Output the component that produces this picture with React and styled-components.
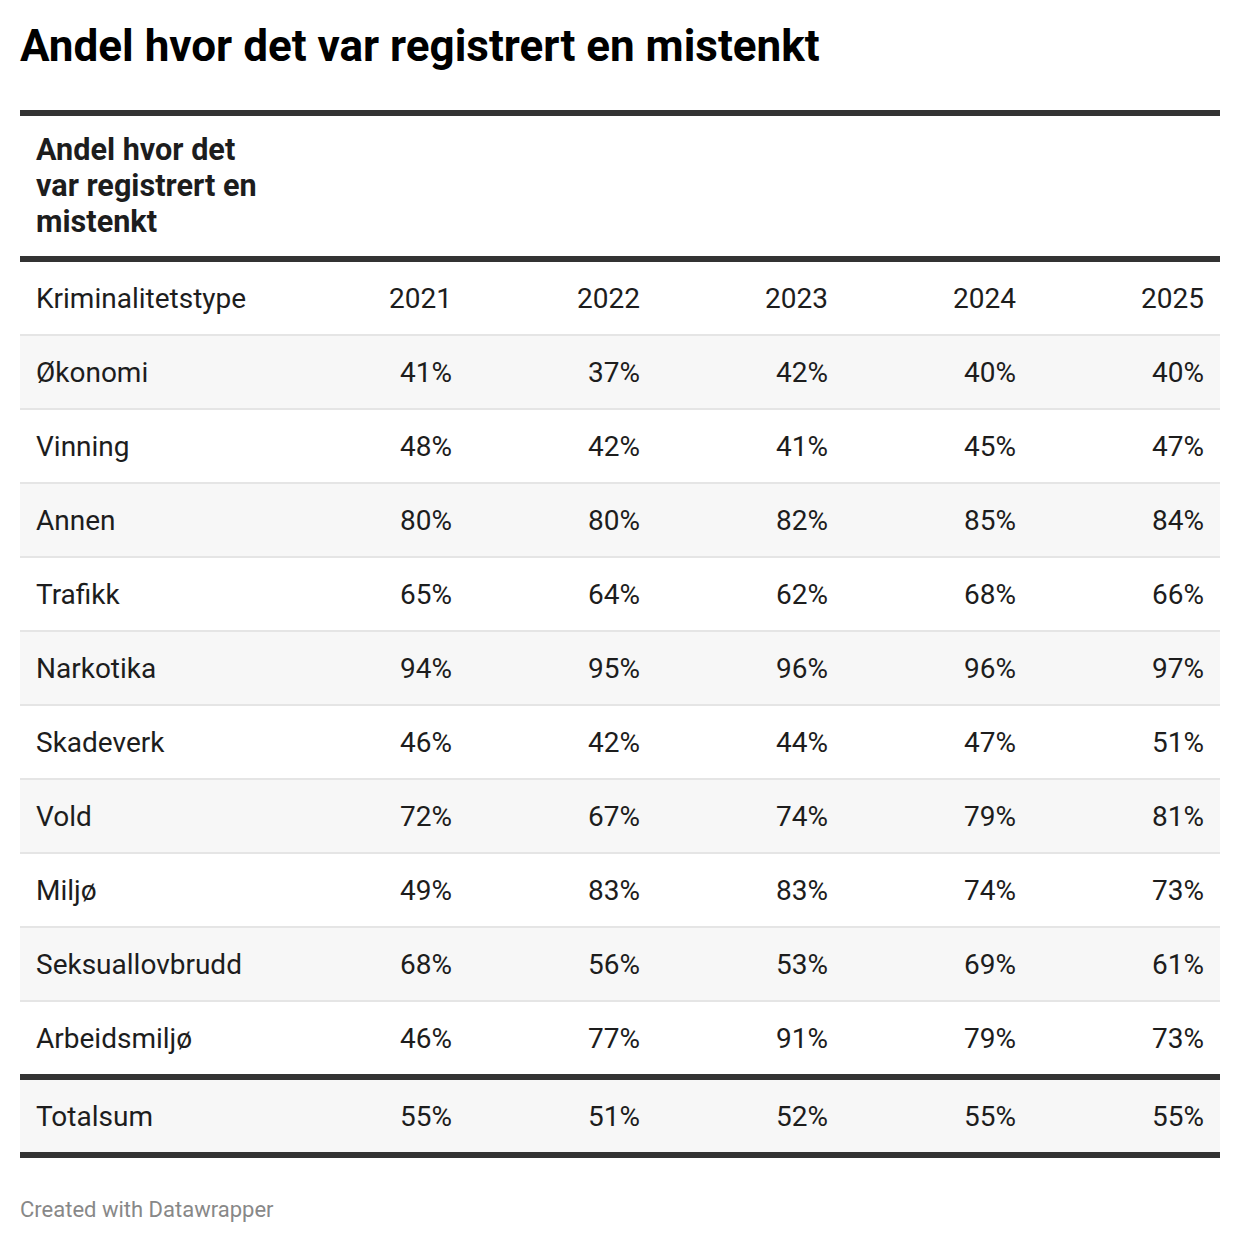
import styled, { createGlobalStyle } from 'styled-components'

const GlobalStyle = createGlobalStyle`
  body {
    margin: 0;
    background: #fff;
    font-family: Roboto, 'Liberation Sans', sans-serif;
    color: #1d1d1d;
  }
`

const Wrapper = styled.div`
  padding: 20px 20px 0;
`

const Title = styled.h1`
  margin: 0;
  font-size: 44px;
  line-height: 52px;
  font-weight: 700;
  color: #000;
`

const Table = styled.table`
  width: 100%;
  margin-top: 38px;
  border-collapse: collapse;
  table-layout: fixed;
  border-top: 6px solid #333;
  border-bottom: 6px solid #333;
`

const Caption = styled.th`
  padding: 16px 16px 16px;
  text-align: left;
  font-size: 30.6px;
  line-height: 36px;
  font-weight: 700;
  color: #1d1d1d;
  border-bottom: 6px solid #333;
`

const Cell = styled.td`
  height: 71px;
  padding: 1px 16px 0;
  font-size: 28px;
  line-height: 36px;
  text-align: ${({ $left }) => ($left ? 'left' : 'right')};
  white-space: nowrap;
`

const HeadCell = styled(Cell).attrs({ as: 'th' })`
  font-weight: 400;
`

const Row = styled.tr`
  background: ${({ $shaded }) => ($shaded ? '#f7f7f7' : '#fff')};
  border-bottom: ${({ $last }) => ($last ? '6px solid #333' : '2px solid #e5e5e5')};
`

const TotalRow = styled.tr`
  background: #f7f7f7;
`

const Footer = styled.div`
  padding: 40px 0 20px;
  font-size: 22px;
  line-height: 24px;
  color: #888;
`

const years = ['2021', '2022', '2023', '2024', '2025']

const rows = [
  ['Økonomi', '41%', '37%', '42%', '40%', '40%'],
  ['Vinning', '48%', '42%', '41%', '45%', '47%'],
  ['Annen', '80%', '80%', '82%', '85%', '84%'],
  ['Trafikk', '65%', '64%', '62%', '68%', '66%'],
  ['Narkotika', '94%', '95%', '96%', '96%', '97%'],
  ['Skadeverk', '46%', '42%', '44%', '47%', '51%'],
  ['Vold', '72%', '67%', '74%', '79%', '81%'],
  ['Miljø', '49%', '83%', '83%', '74%', '73%'],
  ['Seksuallovbrudd', '68%', '56%', '53%', '69%', '61%'],
  ['Arbeidsmiljø', '46%', '77%', '91%', '79%', '73%']
]

const total = ['Totalsum', '55%', '51%', '52%', '55%', '55%']

const App = () => (
  <Wrapper>
    <GlobalStyle />
    <Title>Andel hvor det var registrert en mistenkt</Title>

    <Table>
      <colgroup>
        <col style={ { width: 260 } } />
        { years.map(y => <col key={ y } />) }
      </colgroup>
      <thead>
        <tr>
          <Caption colSpan={ 6 }>
            Andel hvor det<br />var registrert en<br />mistenkt
          </Caption>
        </tr>
        <Row>
          <HeadCell $left>Kriminalitetstype</HeadCell>
          { years.map(y => <HeadCell key={ y }>{ y }</HeadCell>) }
        </Row>
      </thead>
      <tbody>
        { rows.map(([label, ...values], i) => (
          <Row key={ label } $shaded={ i % 2 === 0 } $last={ i === rows.length - 1 }>
            <Cell $left>{ label }</Cell>
            { values.map((v, j) => <Cell key={ j }>{ v }</Cell>) }
          </Row>
        )) }
        <TotalRow>
          <Cell $left>{ total[0] }</Cell>
          { total.slice(1).map((v, j) => <Cell key={ j }>{ v }</Cell>) }
        </TotalRow>
      </tbody>
    </Table>

    <Footer>Created with Datawrapper</Footer>
  </Wrapper>
)

export default App
